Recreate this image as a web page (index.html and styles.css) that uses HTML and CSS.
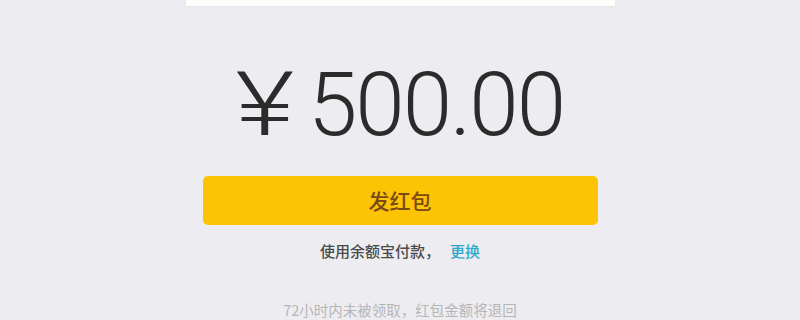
FILE: index.html
```html
<!DOCTYPE html>
<html lang="zh-CN">
<head>
<meta charset="utf-8">
<title>发红包</title>
<link rel="stylesheet" href="styles.css">
</head>
<body>
<div class="page">
  <div class="top-card"></div>
  <div class="amount"><span class="yen">¥</span><span class="num">500.00</span></div>
  <button class="send-btn">发红包</button>
  <div class="pay-line"><span class="pay-text">使用余额宝付款，</span><a class="change">更换</a></div>
  <div class="notice">72小时内未被领取，红包金额将退回</div>
</div>
</body>
</html>
```

FILE: styles.css
```css
html, body {
  margin: 0;
  padding: 0;
  background: #ededf1;
}
.page {
  width: 800px;
  height: 320px;
  overflow: hidden;
  display: flex;
  flex-direction: column;
  align-items: center;
  font-family: Roboto, "Noto Sans CJK SC", sans-serif;
}
.top-card {
  width: 429px;
  height: 6px;
  background: #fefefc;
  box-shadow: 0 1px 2px rgba(0,0,0,0.03);
}
.amount {
  margin-top: 54px;
  height: 89px;
  display: flex;
  align-items: baseline;
  gap: 14px;
  font-size: 89px;
  line-height: 89px;
  font-weight: 300;
  color: #2b2b2b;
  white-space: nowrap;
}
.yen {
  display: inline-block;
  transform: scaleX(1.28);
  transform-origin: center;
  margin: 0 6px;
}
.num {
  letter-spacing: -2px;
}
.send-btn {
  margin-top: 27px;
  width: 395px;
  height: 51px;
  border: none;
  border-radius: 5px;
  background: #fdc305;
  color: #7a4a12;
  font-family: "Noto Sans CJK SC", sans-serif;
  font-size: 21px;
  font-weight: 500;
  padding: 0;
}
.pay-line {
  margin-top: 16px;
  line-height: 20px;
  font-family: "Noto Sans CJK SC", sans-serif;
  font-size: 15px;
  font-weight: 500;
  display: flex;
  gap: 10px;
}
.pay-text {
  color: #4a4a4a;
}
.change {
  color: #2fa6c8;
}
.notice {
  margin-top: 39px;
  line-height: 20px;
  font-family: "Noto Sans CJK SC", sans-serif;
  font-size: 14.5px;
  color: #b6b6b8;
}
```
